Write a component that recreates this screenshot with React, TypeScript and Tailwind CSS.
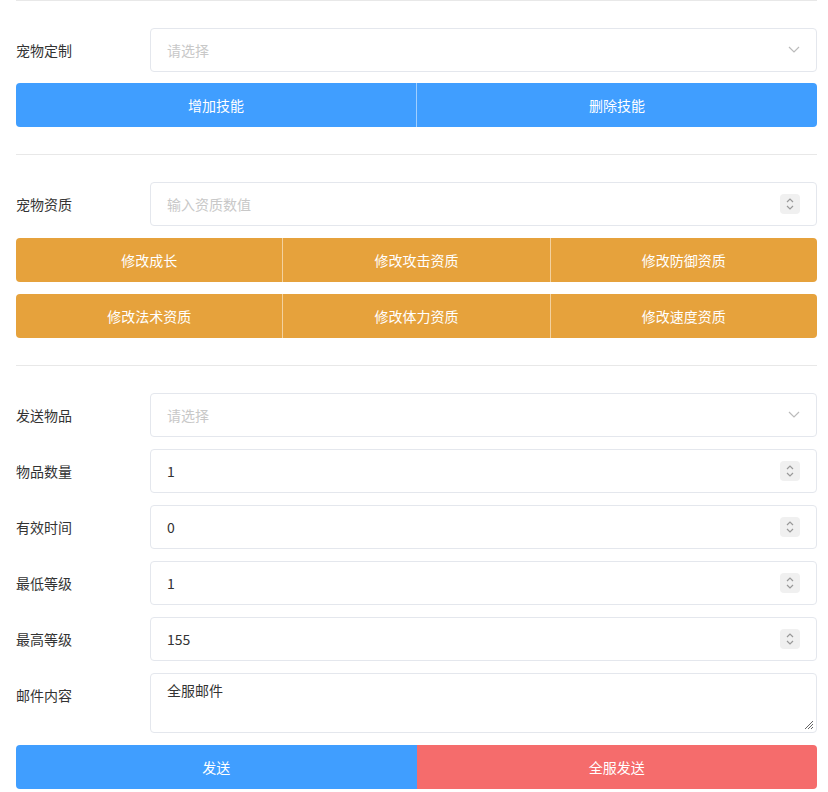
import React from "react";

const font = { fontFamily: '"Noto Sans CJK SC", "Noto Sans", sans-serif' };

function Spin() {
  return (
    <div className="w-[20px] h-[20px] bg-[#f0f0f0] rounded-sm flex items-center justify-center">
      <svg width="10" height="14" viewBox="0 0 10 14" fill="none" stroke="#999" strokeWidth="1.2">
        <path d="M2 5l3-3 3 3M2 9l3 3 3-3" />
      </svg>
    </div>
  );
}

function Row({ label, children }: { label: string; children: React.ReactNode }) {
  return (
    <div className="flex items-center h-[44px]">
      <div className="w-[134px] text-[14px] text-[#333]">{label}</div>
      {children}
    </div>
  );
}

function Select() {
  return (
    <div className="flex-1 h-[44px] border border-[#e4e7ed] rounded flex items-center px-[16px] justify-between bg-white">
      <span className="text-[14px] text-[#c8c8c8]">请选择</span>
      <svg width="12" height="8" viewBox="0 0 12 8" fill="none" stroke="#bbb" strokeWidth="1.2"><path d="M1 1l5 5 5-5" /></svg>
    </div>
  );
}

function Num({ value, placeholder }: { value?: string; placeholder?: string }) {
  return (
    <div className="flex-1 h-[44px] border border-[#e4e7ed] rounded flex items-center pl-[16px] pr-[16px] justify-between bg-white">
      <span className={"text-[14px] " + (value ? "text-[#333]" : "text-[#c8c8c8]")}>{value ?? placeholder}</span>
      <Spin />
    </div>
  );
}

function Btns({ items, color }: { items: string[]; color: string }) {
  return (
    <div className={"flex h-[44px] rounded overflow-hidden " + color}>
      {items.map((t, i) => (
        <div key={t} className={"flex-1 flex items-center justify-center text-white text-[14px] " + (i > 0 ? "border-l border-white/50" : "")}>{t}</div>
      ))}
    </div>
  );
}

export default function App() {
  return (
    <div style={font} className="w-[828px] h-[792px] bg-white px-[16px] pr-[11px] overflow-hidden">
      <div className="border-t border-[#e8e8e8] h-[28px]" />
      <Row label="宠物定制"><Select /></Row>
      <div className="h-[11px]" />
      <div className="flex h-[44px] rounded overflow-hidden bg-[#409eff]">
        <div className="flex-1 flex items-center justify-center text-white text-[14px]">增加技能</div>
        <div className="flex-1 flex items-center justify-center text-white text-[14px] border-l border-white/50">删除技能</div>
      </div>
      <div className="h-[27px]" />
      <div className="border-t border-[#e8e8e8] h-[28px]" />
      <Row label="宠物资质"><Num placeholder="输入资质数值" /></Row>
      <div className="h-[12px]" />
      <Btns items={["修改成长", "修改攻击资质", "修改防御资质"]} color="bg-[#e6a23c]" />
      <div className="h-[12px]" />
      <Btns items={["修改法术资质", "修改体力资质", "修改速度资质"]} color="bg-[#e6a23c]" />
      <div className="h-[27px]" />
      <div className="border-t border-[#e8e8e8] h-[28px]" />
      <div className="flex flex-col gap-[12px]">
        <Row label="发送物品"><Select /></Row>
        <Row label="物品数量"><Num value="1" /></Row>
        <Row label="有效时间"><Num value="0" /></Row>
        <Row label="最低等级"><Num value="1" /></Row>
        <Row label="最高等级"><Num value="155" /></Row>
        <div className="flex">
          <div className="w-[134px] text-[14px] text-[#333] pt-[12px]">邮件内容</div>
          <div className="flex-1 h-[60px] border border-[#e4e7ed] rounded relative px-[16px] pt-[6px] text-[14px] text-[#333]">
            全服邮件
            <svg className="absolute right-[2px] bottom-[2px]" width="12" height="12" viewBox="0 0 12 12" stroke="#666" strokeWidth="1"><path d="M11 3L3 11M11 6L6 11M11 9L9 11" /></svg>
          </div>
        </div>
      </div>
      <div className="h-[12px]" />
      <div className="flex h-[44px] rounded overflow-hidden">
        <div className="flex-1 flex items-center justify-center text-white text-[14px] bg-[#409eff]">发送</div>
        <div className="flex-1 flex items-center justify-center text-white text-[14px] bg-[#f56c6c]">全服发送</div>
      </div>
    </div>
  );
}
